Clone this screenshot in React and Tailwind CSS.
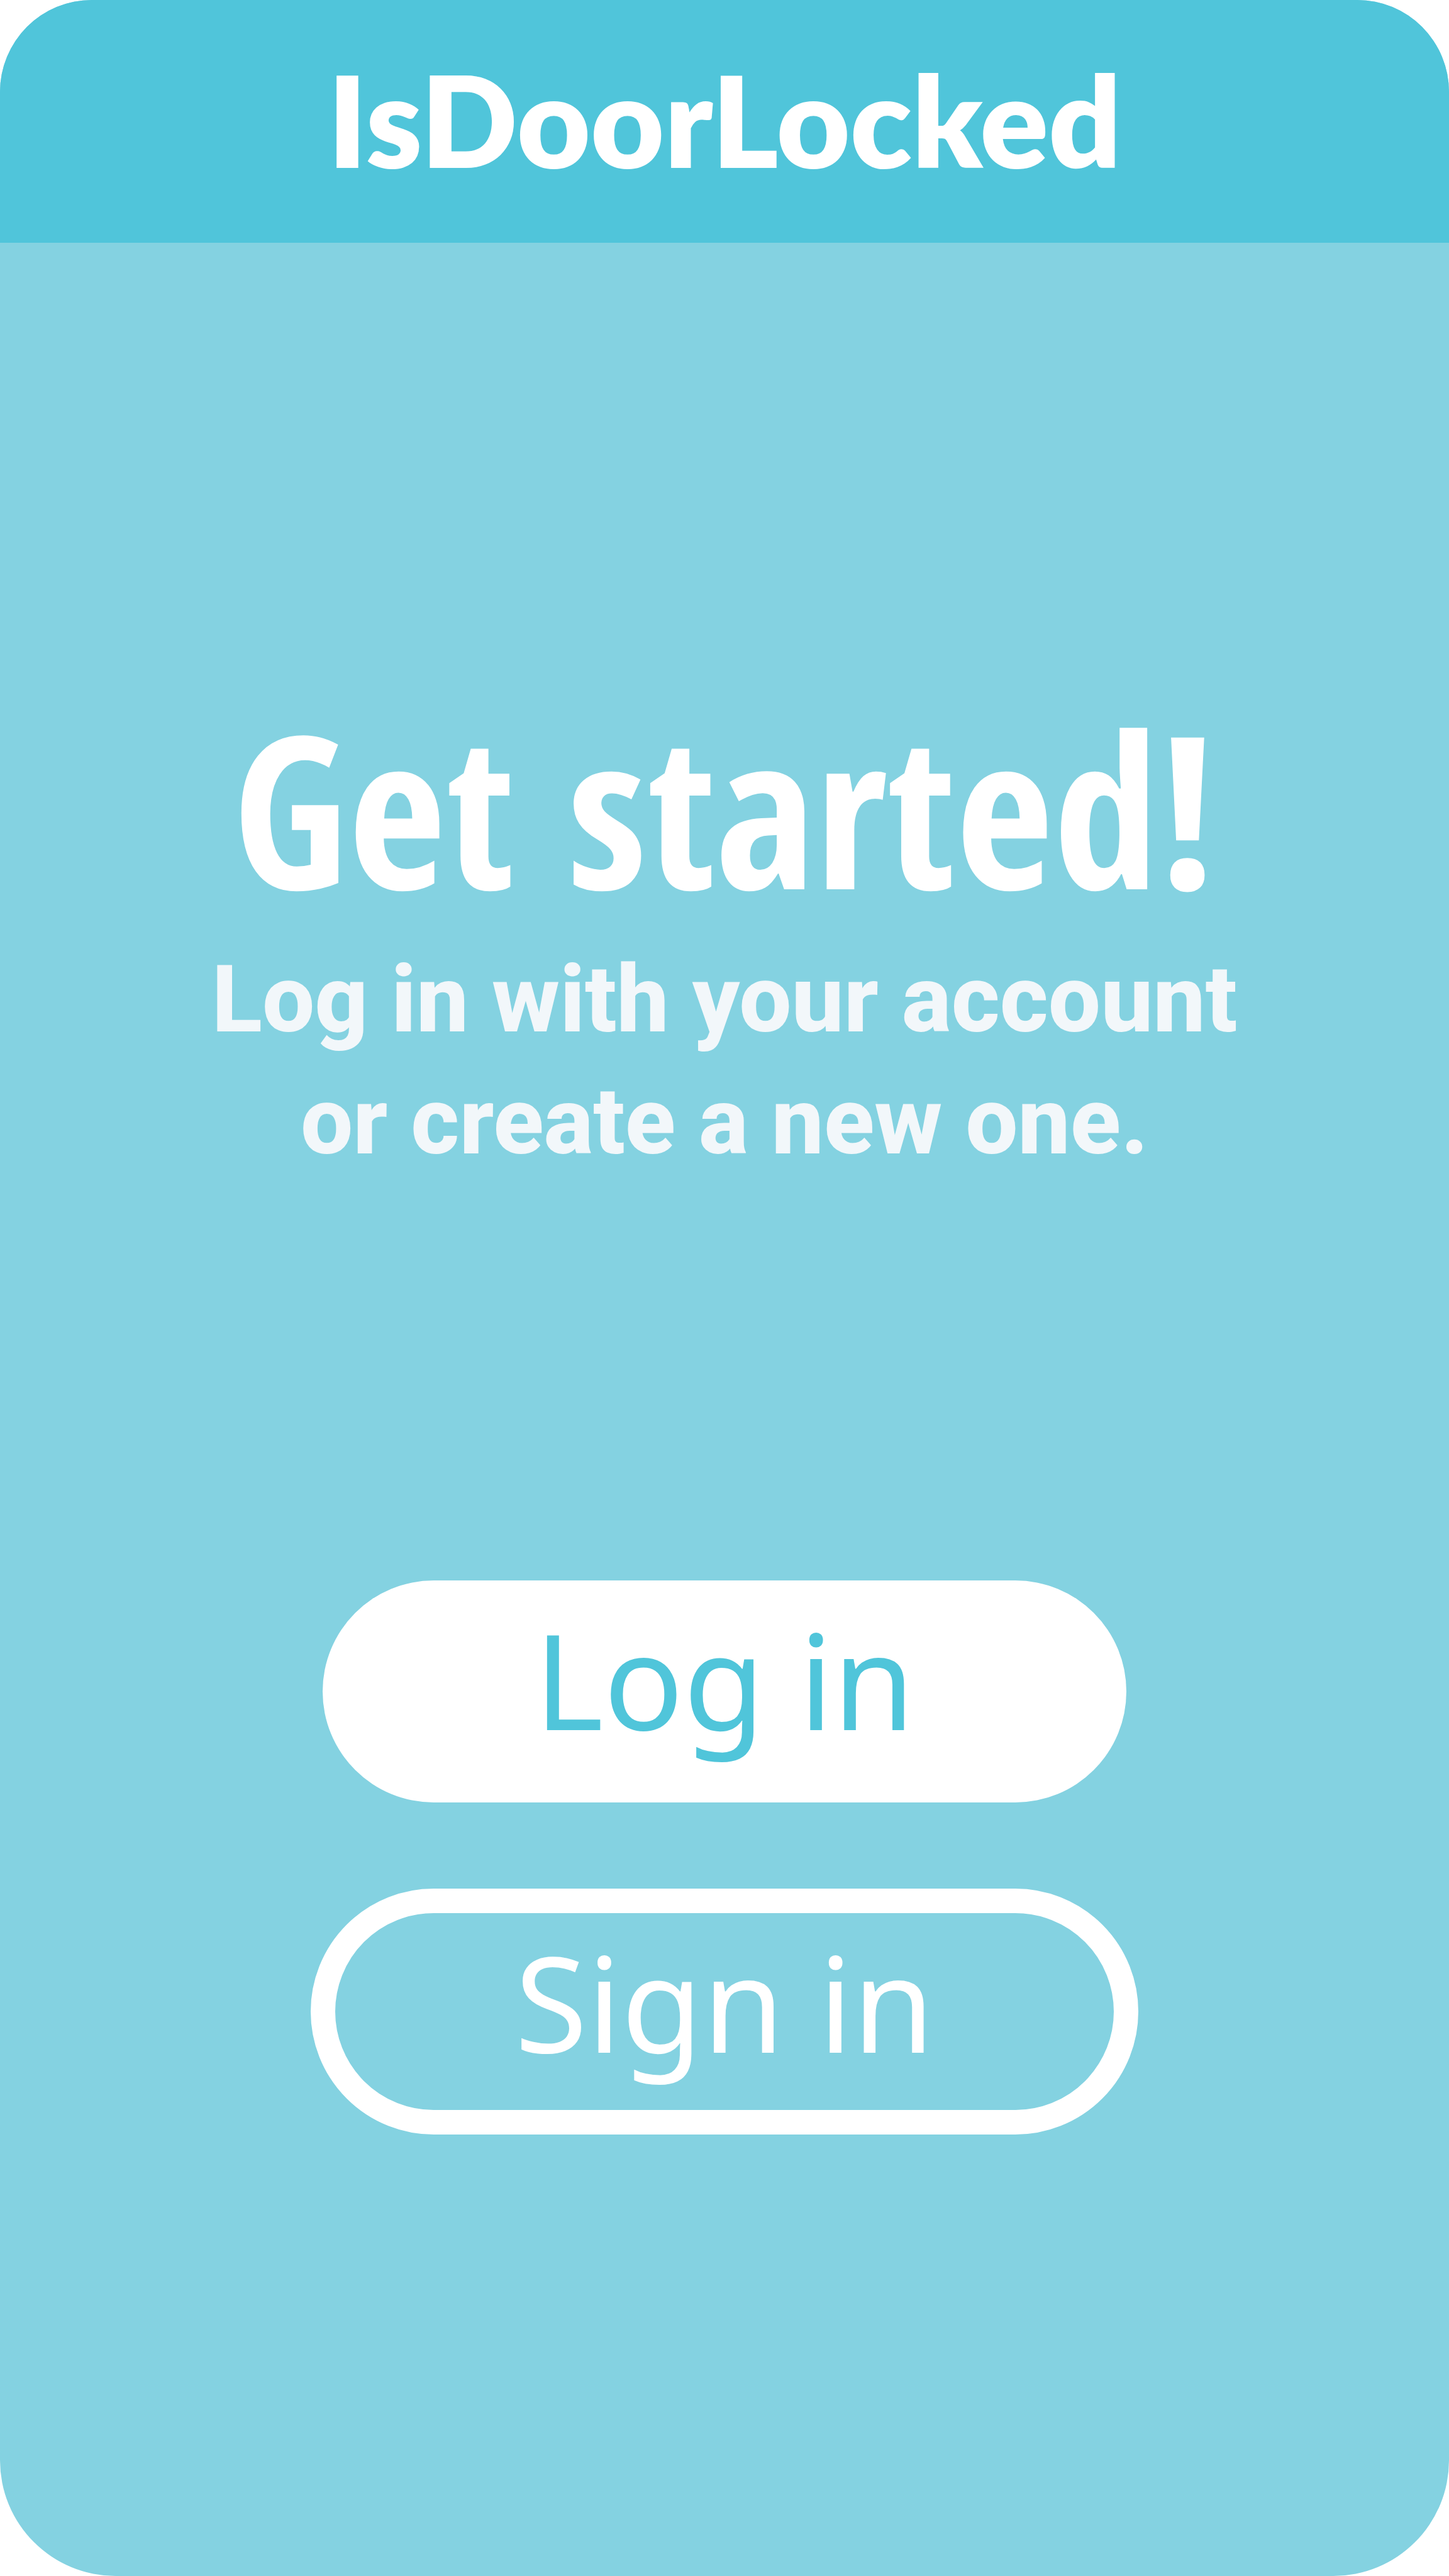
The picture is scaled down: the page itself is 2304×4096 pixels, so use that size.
export default function App() {
  return (
    <div className="flex min-h-screen flex-col overflow-hidden rounded-t-[146px] rounded-b-[184px] bg-[#84d2e1] text-center font-['Noto_Sans','Open_Sans',sans-serif] text-white">
      <header className="flex h-[386px] items-center justify-center bg-[#50c5da] pb-2">
        <h1 className="text-[202px] leading-none font-extrabold font-['Lato','Open_Sans',sans-serif]">
          IsDoorLocked
        </h1>
      </header>
      <main className="flex flex-1 flex-col items-center pt-[717px] pb-[702px]">
        <h2 className="text-[338px] leading-[360px] font-extrabold font-['Open_Sans_Condensed','Roboto_Condensed',sans-serif]">
          Get started!
        </h2>
        <p className="mt-[30px] text-[148px] leading-[194px] font-extrabold text-[#f2f7fa] font-['Roboto','Open_Sans',sans-serif]">
          Log in with your account
          <br />
          or create a new one.
        </p>
        <div className="mt-[632px] flex w-full flex-col items-center gap-[137px]">
          <button
            type="button"
            className="flex h-[353px] w-full max-w-[1278px] items-center justify-center rounded-full bg-white pb-10 text-[210px] leading-none text-[#50c5da]"
          >
            Log in
          </button>
          <button
            type="button"
            className="flex h-[391px] w-full max-w-[1316px] items-center justify-center rounded-full border-[39px] border-white pb-8 text-[210px] leading-none"
          >
            Sign in
          </button>
        </div>
      </main>
    </div>
  );
}
